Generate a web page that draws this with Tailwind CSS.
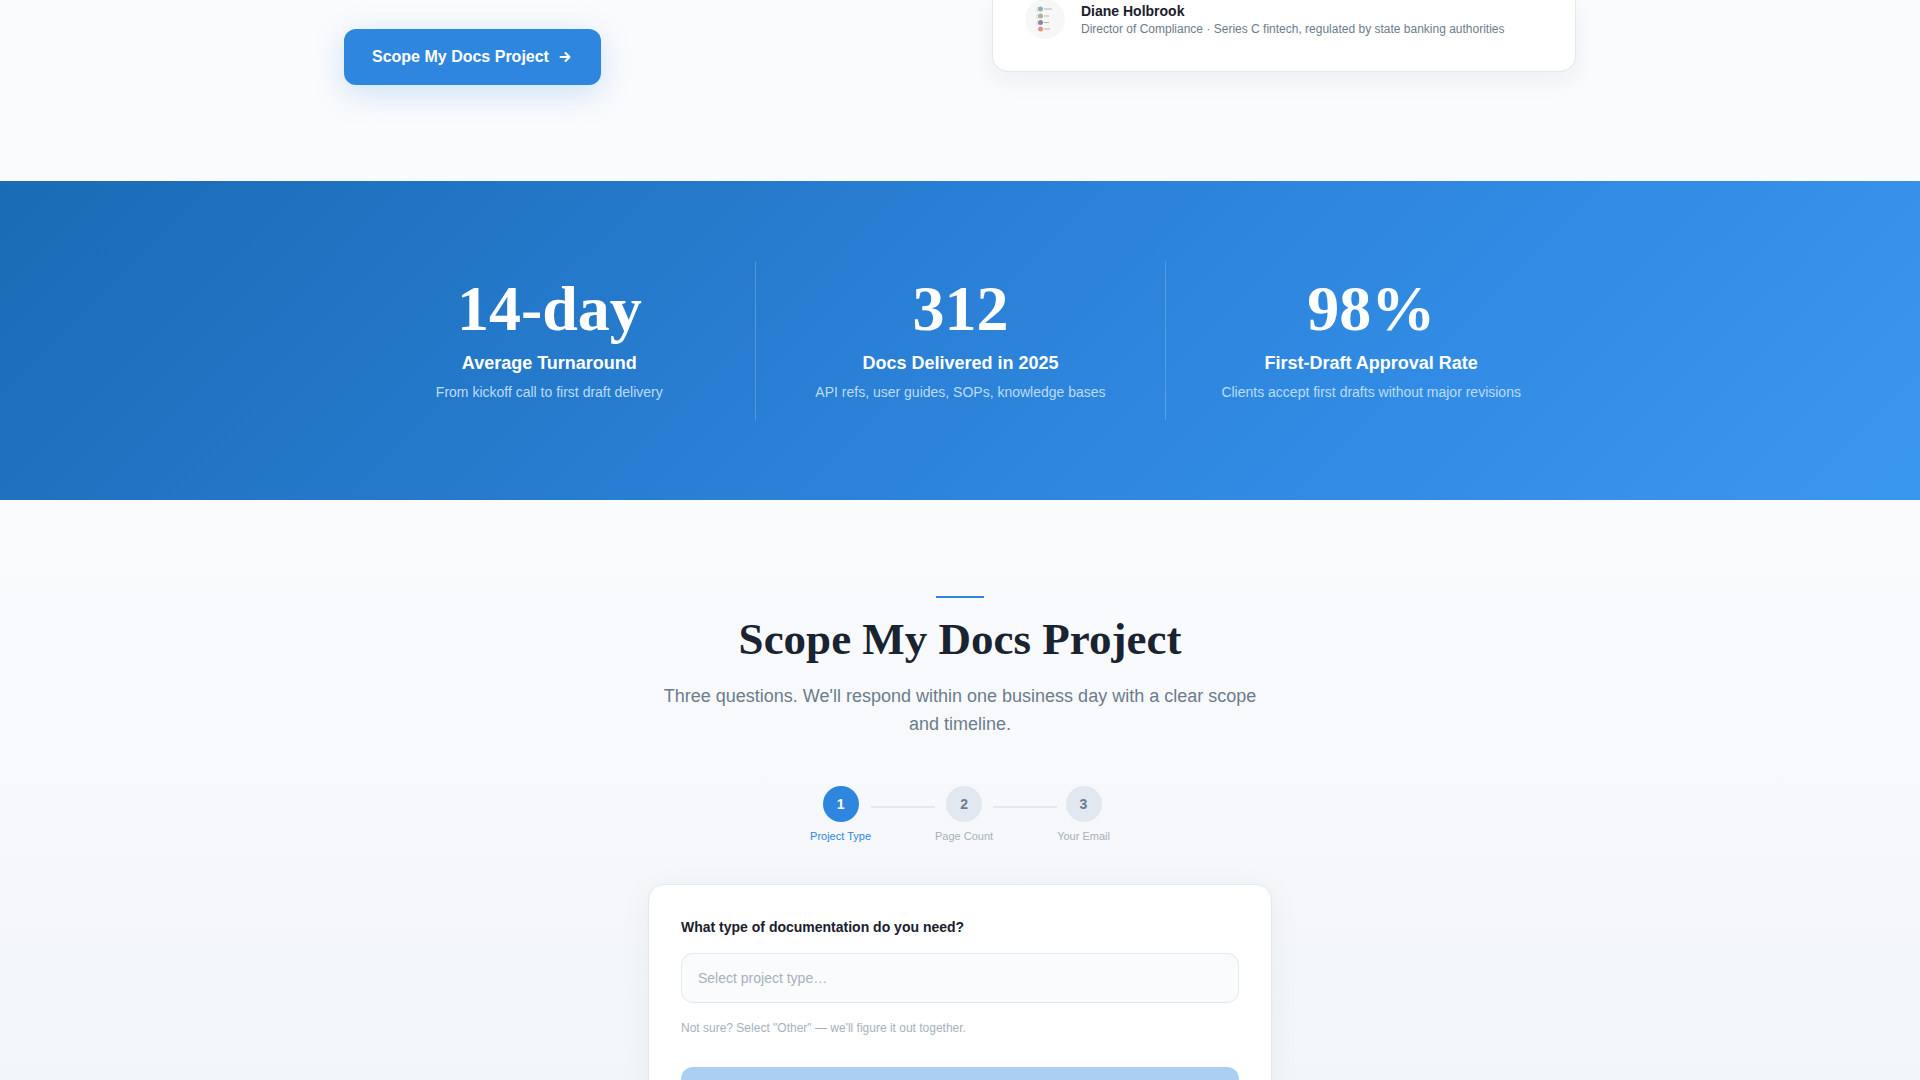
<!DOCTYPE html>
<html lang="en">
<head>
  <meta charset="UTF-8">
  <meta name="viewport" content="width=device-width, initial-scale=1.0">
  <title>Scope My Docs Project</title>
  <script src="https://cdn.jsdelivr.net/npm/@tailwindcss/browser@4"></script>
</head>
<body class="h-screen overflow-hidden bg-[#fafbfd] font-['Liberation_Sans',Arial,sans-serif] text-[#1a202c]">

  <!-- Hero -->
  <section class="px-6 pb-24">
    <div class="mx-auto grid max-w-[1232px] grid-cols-2 gap-16">
      <div class="pt-[29px]">
        <a href="#scope" class="inline-flex h-14 items-center gap-2 rounded-xl bg-[#2e86de] px-7 font-bold text-white shadow-[0_8px_32px_rgba(46,134,222,0.22)]">
          Scope My Docs Project
          <svg class="size-4" viewBox="0 0 16 16" fill="none" stroke="currentColor" stroke-width="2" stroke-linecap="round" stroke-linejoin="round"><path d="M3.500 8h9M8.500 4l4 4-4 4"/></svg>
        </a>
      </div>
      <div class="self-start rounded-b-2xl border border-t-0 border-[#e2e8f0] bg-white px-8 pb-8 shadow-[0_8px_24px_rgba(26,32,44,0.06)]">
        <div class="-mt-px flex items-center gap-4">
          <svg class="size-10 rounded-full" viewBox="0 0 40 40">
            <rect width="40" height="40" fill="#f7f7f7"/>
            <path d="M13 8q-3 2 0 5M13 15q-3 2 0 5M13 22q-3 2 0 5" stroke="#d5dcdc" fill="none"/>
            <path d="M19 10h8M19 17h5M19 23.500h5M19 30h6" stroke="#b5b5b5"/>
            <circle cx="15.500" cy="10" r="2.500" fill="#8fb0b0"/>
            <circle cx="15.500" cy="17" r="2.500" fill="#b0b58c"/>
            <circle cx="15.500" cy="23.500" r="2.500" fill="#8d82ac"/>
            <circle cx="15.500" cy="30" r="2.500" fill="#dd9685"/>
          </svg>
          <div class="pt-0.5">
            <p class="text-sm leading-[18px] font-bold">Diane Holbrook</p>
            <p class="text-xs leading-[18px] text-[#6b7c8d]">Director of Compliance · Series C fintech, regulated by state banking authorities</p>
          </div>
        </div>
      </div>
    </div>
  </section>

  <!-- Stats -->
  <section class="bg-[linear-gradient(135deg,#1a6bb5_0%,#2e86de_60%,#3a97f0_100%)] px-6 py-20">
    <div class="mx-auto grid max-w-[1232px] grid-cols-3 text-center">
      <div class="py-4">
        <p class="font-['Liberation_Serif',serif] text-[64px] leading-none font-bold text-white">14-day</p>
        <p class="mt-2 text-lg leading-7 font-bold text-white">Average Turnaround</p>
        <p class="mt-1 text-sm leading-[22px] text-[#bcdcf8]">From kickoff call to first draft delivery</p>
      </div>
      <div class="border-l border-white/20 py-4">
        <p class="font-['Liberation_Serif',serif] text-[64px] leading-none font-bold text-white">312</p>
        <p class="mt-2 text-lg leading-7 font-bold text-white">Docs Delivered in 2025</p>
        <p class="mt-1 text-sm leading-[22px] text-[#bcdcf8]">API refs, user guides, SOPs, knowledge bases</p>
      </div>
      <div class="border-l border-white/20 pt-4 pb-[17px]">
        <p class="font-['Liberation_Serif',serif] text-[64px] leading-none font-bold text-white">98%</p>
        <p class="mt-2 text-lg leading-7 font-bold text-white">First-Draft Approval Rate</p>
        <p class="mt-1 text-sm leading-[22px] text-[#bcdcf8]">Clients accept first drafts without major revisions</p>
      </div>
    </div>
  </section>

  <!-- Scope form -->
  <section id="scope" class="bg-linear-to-b from-[#fafbfd] to-[#f0f4f8] px-6 py-24">
    <div class="mx-auto max-w-[624px]">
      <div class="text-center">
        <div class="mx-auto h-0.5 w-12 bg-[#2e86de]"></div>
        <h2 class="mt-3.5 font-['Liberation_Serif',serif] text-[45px] leading-[54px] font-bold text-[#1a2332]">Scope My Docs Project</h2>
        <p class="mt-4 text-lg leading-7 text-[#6b7c8d]">Three questions. We'll respond within one business day with a clear scope and timeline.</p>
      </div>

      <ol class="mt-12 flex items-center justify-center text-[11px] leading-4 text-[#a5b1bc]">
        <li class="flex flex-col items-center gap-1.5 text-[#2e86de]">
          <span class="flex size-9 items-center justify-center rounded-full bg-[#2e86de] text-sm font-bold text-white">1</span>
          Project Type
        </li>
        <li class="mb-4 h-0.5 w-16 bg-[#e2e8f0]" aria-hidden="true"></li>
        <li class="flex flex-col items-center gap-1.5">
          <span class="flex size-9 items-center justify-center rounded-full bg-[#e2e8f0] text-sm font-bold text-[#6b7c8d]">2</span>
          Page Count
        </li>
        <li class="mb-4 h-0.5 w-16 bg-[#e2e8f0]" aria-hidden="true"></li>
        <li class="flex flex-col items-center gap-1.5">
          <span class="flex size-9 items-center justify-center rounded-full bg-[#e2e8f0] text-sm font-bold text-[#6b7c8d]">3</span>
          Your Email
        </li>
      </ol>

      <form class="mt-10 rounded-2xl border border-[#e2e8f0] bg-white p-8 shadow-[0_8px_32px_rgba(26,32,44,0.06)]">
        <label for="projectType" class="block text-sm leading-5 font-bold">What type of documentation do you need?</label>
        <select id="projectType" class="mt-4 h-[50px] w-full appearance-none rounded-xl border border-[#e2e8f0] bg-[#fafbfd] px-4 text-sm text-[#a5b1bc]">
          <option>Select project type…</option>
          <option>Other</option>
        </select>
        <p class="mt-4 text-xs leading-[18px] text-[#a5b1bc]">Not sure? Select "Other" — we'll figure it out together.</p>
        <button type="button" disabled class="mt-[30px] h-14 w-full rounded-xl bg-[#2e86de]/40 font-bold text-white">Continue</button>
      </form>
    </div>
  </section>

</body>
</html>
